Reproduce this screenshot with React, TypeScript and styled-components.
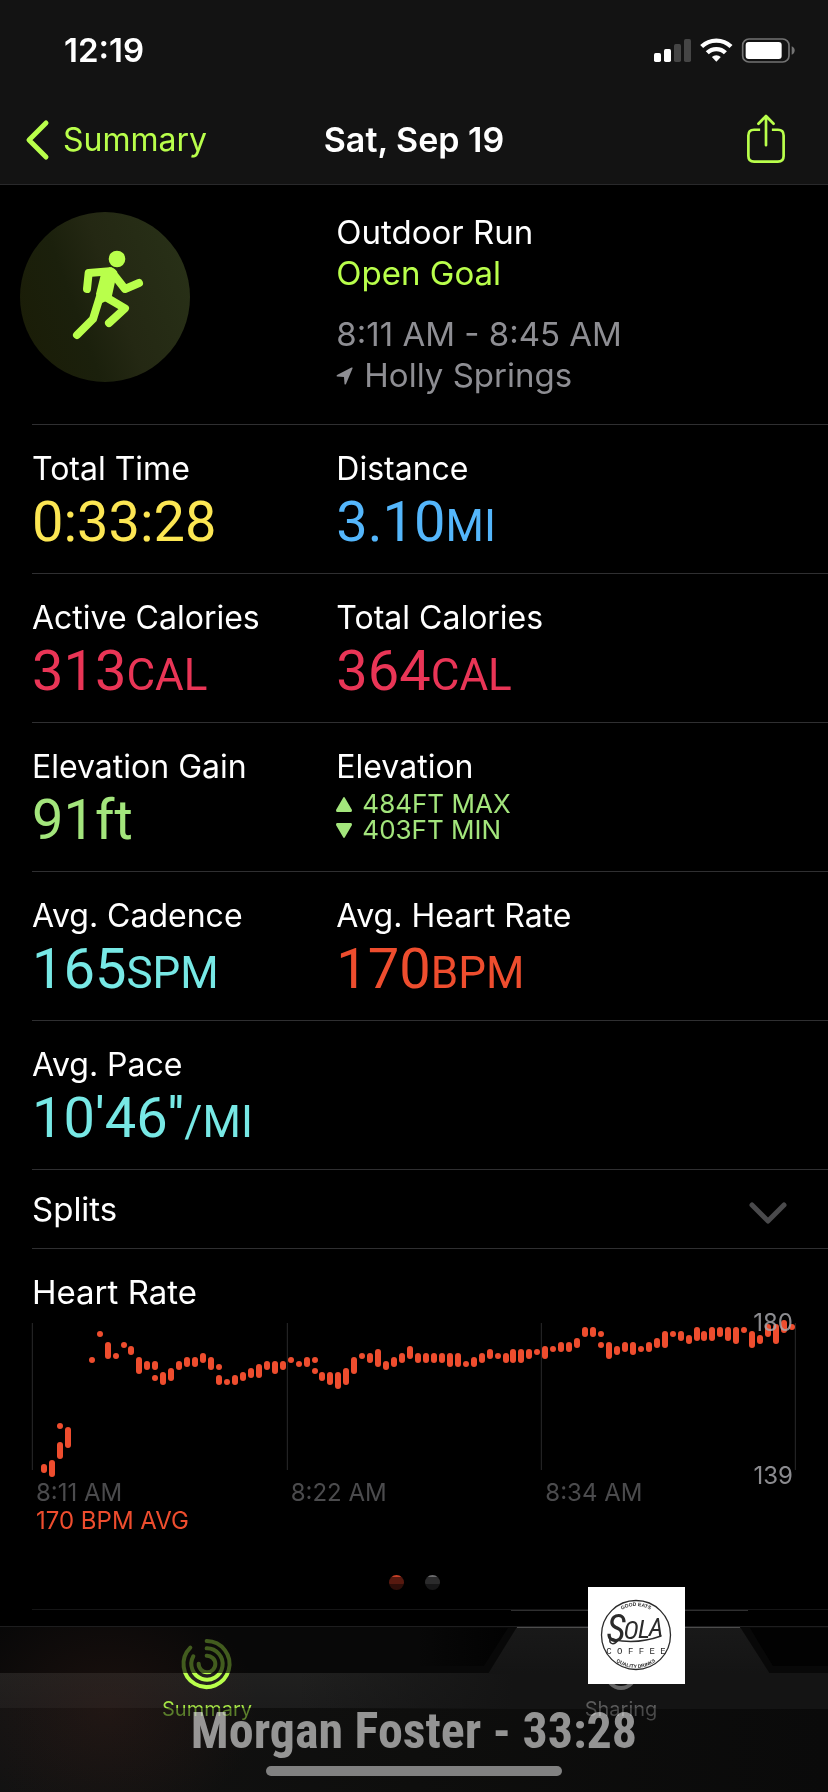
import React from "react";
import styled, { createGlobalStyle } from "styled-components";

const color = {
  lime: "#b9ff4b",
  yellow: "#fce653",
  blue: "#54b6fb",
  pink: "#e93556",
  green: "#a3e57c",
  cyan: "#77e8e5",
  orange: "#ee4d2e",
  gray: "#8e8e93",
  dimGray: "#4b4b4d",
  line: "#2f2f31",
};

const GlobalStyle = createGlobalStyle`
  *, *::before, *::after { box-sizing: border-box; }
  html, body { margin: 0; background: #000; }
  body { font-family: Inter, "Liberation Sans", sans-serif; color: #fff; }
  h1, h2, p, dl, dt, dd { margin: 0; font-weight: 400; }
  button { font: inherit; color: inherit; background: none; border: 0; padding: 0; cursor: pointer; }
  a { color: inherit; text-decoration: none; }
  svg { display: block; overflow: visible; }
`;

const Page = styled.div`
  min-height: 100vh;
  display: flex;
  flex-direction: column;
  overflow-x: hidden;
`;

const Header = styled.header`
  background: #131313;
  border-bottom: 1px solid #29292b;
`;

const StatusBar = styled.div`
  height: 96px;
  padding: 4px 33px 0 64px;
  display: flex;
  align-items: center;
  justify-content: space-between;
`;

const Clock = styled.span`
  font-size: 33px;
  line-height: 40px;
  font-weight: 600;
`;

const StatusIcons = styled.div`
  display: flex;
  align-items: center;
  gap: 10px;
`;

const NavBar = styled.nav`
  height: 88px;
  padding: 0 43px 0 26px;
  display: grid;
  grid-template-columns: 1fr auto 1fr;
  align-items: center;
`;

const BackLink = styled.a`
  display: flex;
  align-items: center;
  gap: 15px;
  color: ${color.lime};
  font-size: 32px;
  line-height: 42px;
`;

const NavTitle = styled.h1`
  font-size: 34px;
  line-height: 42px;
  font-weight: 600;
  margin-left: 17px;
`;

const ShareButton = styled.button`
  justify-self: end;
  color: ${color.lime};
`;

const Main = styled.main`
  padding-left: 32px;
`;

const Columns = styled.div`
  display: grid;
  grid-template-columns: 13fr 21fr;
  border-bottom: 1px solid ${color.line};
`;

const Hero = styled(Columns)`
  min-height: 240px;
  padding: 27px 0;
`;

const Badge = styled.div`
  width: 170px;
  height: 170px;
  margin-left: -12px;
  border-radius: 50%;
  background: linear-gradient(70deg, #1a1c06 0%, #1b200c 35%, #242813 55%, #293218 100%);
`;

const Line = styled.p<{ $tone?: string }>`
  display: flex;
  align-items: center;
  gap: 11px;
  font-size: 33px;
  line-height: 41px;
  color: ${(p) => p.$tone ?? "#fff"};
`;

const When = styled.div`
  margin-top: 20px;
`;

const MetricRow = styled(Columns).attrs({ as: "dl" })`
  min-height: 149px;
  padding-top: 23px;
`;

const MetricLabel = styled.dt`
  font-size: 32px;
  line-height: 42px;
`;

const MetricValue = styled.dd<{ $tone: string }>`
  margin-top: 2px;
  font-family: Roboto, "Liberation Sans", sans-serif;
  font-size: 56px;
  line-height: 60px;
  color: ${(p) => p.$tone};
`;

const Unit = styled.span`
  font-size: 44px;
`;

const Range = styled.dd`
  color: ${color.green};
  font-size: 26px;
  line-height: 26px;
  padding-top: 3px;
`;

const RangeLine = styled.div`
  display: flex;
  align-items: center;
  gap: 10px;
`;

const SplitsRow = styled.button`
  width: 100%;
  min-height: 79px;
  padding-right: 41px;
  display: flex;
  align-items: center;
  justify-content: space-between;
  border-bottom: 1px solid ${color.line};
  font-size: 33px;
  line-height: 41px;
  text-align: left;

  svg { margin-top: 8px; }
`;

const HeartSection = styled.section`
  padding: 23px 0 19px;
  border-bottom: 1px solid #151516;
`;

const SectionTitle = styled.h2`
  font-size: 33px;
  line-height: 41px;
`;

const ChartBox = styled.div`
  position: relative;
  margin: 10px 32px 0 0;
`;

const Bound = styled.span<{ $edge: "top" | "bottom" }>`
  position: absolute;
  right: 3px;
  ${(p) => (p.$edge === "top" ? "top: -14px" : "bottom: -20px")};
  font-size: 24px;
  line-height: 28px;
  color: #aaaaaf;
  opacity: 0.82;
`;

const TimeAxis = styled.div`
  margin: 9px 32px 0 0;
  display: grid;
  grid-template-columns: repeat(3, 1fr);
`;

const Tick = styled.span<{ $tone?: string }>`
  padding-left: 4px;
  font-size: 24px;
  line-height: 28px;
  color: ${(p) => p.$tone ?? color.dimGray};
`;

const Dots = styled.div`
  margin: 40px 32px 0 0;
  display: flex;
  justify-content: center;
  gap: 21px;
`;

const Dot = styled.span<{ $tint: string; $mid: string; $low: string }>`
  width: 15px;
  height: 15px;
  border-radius: 50%;
  background: linear-gradient(
    ${(p) => p.$tint} 2px,
    ${(p) => p.$mid} 2px,
    ${(p) => p.$mid} 9px,
    ${(p) => p.$low} 9px
  );
`;

const Footer = styled.footer`
  position: relative;
  margin-top: auto;
  height: 166px;
  border-top: 1px solid #1d1d1e;
  background:
    radial-gradient(150px 120px at 13% 50%, rgba(70, 36, 28, 0.3), transparent),
    linear-gradient(#080808 46px, transparent 46px),
    linear-gradient(90deg, transparent 36%, #141414 62%) 0 46px / 100% 36px no-repeat,
    linear-gradient(transparent 46px, #20201f 46px, #1c1c1c 81px, transparent 81px),
    linear-gradient(90deg, #121212, #0e0e0d 50%, #0a0a0a);
`;

const Notch = styled.svg`
  position: absolute;
  left: 50%;
  top: -18px;
  width: 414px;
  height: 184px;
`;

const Tabs = styled.nav`
  position: relative;
  display: grid;
  grid-template-columns: 1fr 1fr;
`;

const Tab = styled.a<{ $active?: boolean }>`
  display: flex;
  flex-direction: column;
  align-items: center;
  padding-top: 12px;
  gap: 8px;
  font-size: 20px;
  line-height: 24px;

  span {
    color: transparent;
    background: ${(p) =>
      p.$active
        ? "linear-gradient(#a5e545 11px, #5b7f2b 11px)"
        : "linear-gradient(#5c5c5c 11px, #484848 11px)"};
    background-clip: text;
    -webkit-background-clip: text;
  }
`;

const SponsorCard = styled.div`
  position: absolute;
  left: 71%;
  top: -40px;
  width: 97px;
  height: 97px;
  background: #fff;
`;

const Caption = styled.p`
  position: absolute;
  left: 0;
  right: 0;
  top: 72px;
  text-align: center;
  font-family: "Liberation Sans Narrow", "Roboto Condensed", Roboto, sans-serif;
  font-weight: 700;
  font-size: 50px;
  line-height: 64px;
  color: #8e8e8e;
  mix-blend-mode: screen;
`;

const HomeIndicator = styled.div`
  position: absolute;
  left: 50%;
  bottom: 16px;
  width: 296px;
  height: 10px;
  margin-left: -148px;
  border-radius: 5px;
  background: #818181;
`;

/* Heart-rate samples: centre, top and bottom of each bar in chart units. */
const samples: [number, number, number][] = [
  [132, 882, 909], [156, 870, 921], [180, 759, 777], [180, 816, 867], [204, 771, 834],
  [276, 561, 579], [300, 483, 501], [324, 516, 567], [348, 549, 567], [372, 516, 534],
  [393, 528, 555], [417, 561, 612], [441, 573, 600], [465, 573, 600], [465, 615, 633],
  [489, 606, 645], [513, 594, 633], [537, 573, 600], [561, 561, 591], [585, 561, 591],
  [609, 549, 579], [633, 561, 600], [657, 582, 600], [657, 615, 645], [681, 627, 645],
  [705, 615, 645], [729, 606, 633], [753, 594, 624], [777, 582, 624], [801, 573, 600],
  [825, 573, 612], [849, 573, 600], [873, 561, 579], [897, 573, 591], [921, 561, 591],
  [945, 561, 579], [945, 594, 612], [966, 606, 633], [990, 606, 645], [1014, 606, 657],
  [1038, 594, 645], [1062, 561, 612], [1086, 549, 567], [1110, 549, 579], [1134, 537, 591],
  [1158, 573, 600], [1182, 561, 591], [1206, 549, 579], [1230, 528, 567], [1254, 549, 579],
  [1278, 549, 579], [1302, 549, 579], [1326, 549, 579], [1350, 549, 591], [1374, 549, 591],
  [1398, 573, 591], [1422, 561, 591], [1446, 549, 579], [1470, 537, 567], [1494, 549, 567],
  [1518, 549, 579], [1539, 537, 579], [1563, 537, 579], [1587, 537, 567], [1611, 537, 555],
  [1635, 528, 567], [1659, 528, 546], [1683, 516, 546], [1707, 516, 546], [1731, 504, 534],
  [1755, 471, 501], [1779, 471, 501], [1803, 483, 501], [1803, 516, 534], [1827, 516, 567],
  [1851, 528, 555], [1875, 516, 546], [1899, 516, 555], [1923, 528, 546], [1947, 516, 546],
  [1971, 504, 534], [1995, 483, 534], [2019, 483, 501], [2043, 483, 513], [2067, 495, 522],
  [2091, 471, 513], [2112, 483, 513], [2136, 471, 513], [2160, 471, 501], [2184, 471, 513],
  [2208, 471, 522], [2232, 471, 489], [2256, 483, 534], [2280, 495, 522], [2304, 462, 501],
  [2328, 462, 522], [2352, 450, 489], [2376, 462, 480],
];

function SignalIcon() {
  return (
    <svg width="37" height="23" viewBox="75 54 111 69" aria-label="Signal">
      <rect x="75" y="96" width="21" height="27" rx="5" fill="#fff" />
      <rect x="105" y="84" width="21" height="39" rx="5" fill="#fff" />
      <rect x="135" y="69" width="21" height="54" rx="5" fill="#454545" />
      <rect x="165" y="54" width="21" height="69" rx="5" fill="#454545" />
    </svg>
  );
}

function WifiIcon() {
  return (
    <svg width="31" height="24" viewBox="216 52 94 71" fill="none" stroke="#fff" strokeWidth="13" aria-label="Wi-Fi">
      <path d="M218 77 A64 64 0 0 1 307 77" />
      <path d="M235 96 A39 39 0 0 1 290 96" />
      <path d="M249 109 A20 20 0 0 1 276 109 L262.500 123 Z" fill="#fff" stroke="none" />
    </svg>
  );
}

function BatteryIcon() {
  return (
    <svg width="53" height="25" viewBox="340 51 159 75" aria-label="Battery">
      <rect x="342" y="54" width="139" height="69" rx="19" fill="none" stroke="#737373" strokeWidth="5" />
      <rect x="351" y="63" width="108" height="51" rx="9" fill="#fff" />
      <path d="M489 76 Q498 80 498 88.500 Q498 97 489 101 Z" fill="#737373" />
    </svg>
  );
}

function ShareIcon() {
  return (
    <svg width="38" height="48" viewBox="354 286 113 143" fill="none" stroke="currentColor" strokeWidth="8" strokeLinecap="round" strokeLinejoin="round">
      <path strokeLinecap="butt" d="M393 327 H375 Q358 327 358 344 V405 Q358 422 375 422 H446 Q463 422 463 405 V344 Q463 327 446 327 H428" />
      <path d="M410.500 373 V287 M388 309 L410.500 286 L433 309" />
    </svg>
  );
}

function Runner() {
  return (
    <svg width="170" height="170" viewBox="60 66 510 510" fill="none" stroke={color.lime} strokeWidth="24" strokeLinecap="round" strokeLinejoin="round" aria-label="Running">
      <circle cx="351" cy="207" r="25" fill={color.lime} stroke="none" />
      <path d="M261 297 L266 249 L330 244" />
      <path d="M338 250 L375 297 L417 279" />
      <path d="M231 435 L279 387 L306 300" />
      <path d="M322 324 L375 355 L327 399" />
      <path d="M302 256 L328 232 Q344 232 352 246 L345 276 L334 326 L304 340 L288 312 Z" fill={color.lime} stroke="none" />
    </svg>
  );
}

function Rings() {
  return (
    <svg width="50" height="50" viewBox="546 297 150 150" fill="none" strokeWidth="12" strokeLinecap="round" aria-hidden="true">
      <defs>
        <linearGradient id="ringShade" gradientUnits="userSpaceOnUse" x1="0" x2="0" y1="297" y2="447">
          <stop offset="0.68" stopColor="#425c1e" />
          <stop offset="0.68" stopColor={color.lime} />
        </linearGradient>
      </defs>
      <g stroke="url(#ringShade)">
        <path d="M620 303 A69 69 0 1 1 571 323" />
        <path d="M620 325 A47 47 0 1 1 580 349" />
        <path d="M620 347 A25 25 0 1 1 596 371" />
      </g>
    </svg>
  );
}

function SponsorLogo() {
  return (
    <svg width="97" height="97" viewBox="0 0 97 97" fill="none" stroke="#2b2b2b" aria-label="Sola Coffee">
      <defs>
        <path id="arcTop" d="M19 48 A29 29 0 0 1 77 48" />
        <path id="arcBottom" d="M15 48 A33 33 0 0 0 81 48" />
      </defs>
      <circle cx="48" cy="48" r="34.500" strokeWidth="1.300" />
      <g fill="#2b2b2b" stroke="none" fontFamily="'Liberation Sans', sans-serif" textAnchor="middle">
        <text fontSize="5" fontWeight="700"><textPath href="#arcTop" startOffset="50%">GOOD EATS</textPath></text>
        <text fontSize="5" fontWeight="700"><textPath href="#arcBottom" startOffset="50%">QUALITY DRINKS</textPath></text>
        <text x="48" y="67" fontSize="9" fontFamily="'Liberation Mono', monospace">C O F F E E</text>
        <g fontFamily="'Liberation Sans Narrow', 'Roboto Condensed', Roboto, sans-serif" fontStyle="italic">
          <text x="28" y="55" fontSize="38">S</text>
          <text x="43" y="52" fontSize="26">O</text>
          <text x="56" y="51" fontSize="26">L</text>
          <text x="68" y="49" fontSize="26">A</text>
        </g>
      </g>
      <path d="M30 53 C26 59 21 57 22 52 C24 50 28 54 34 54 Q54 56 73 49" strokeWidth="1.500" strokeLinecap="round" />
    </svg>
  );
}

function HeartChart() {
  return (
    <svg width="100%" viewBox="96 459 2292 441" role="img" aria-label="Heart rate over time">
      {[97, 862, 1624, 2386].map((x) => (
        <line key={x} x1={x} x2={x} y1="459" y2="900" stroke="#29292b" strokeWidth="3" />
      ))}
      {samples.map(([x, top, bottom]) => (
        <rect key={`${x}-${top}`} x={x - 9} y={top} width="18" height={bottom - top} rx="9" fill={color.orange} />
      ))}
    </svg>
  );
}

type MetricProps = { label: string; value: string; unit?: string; tone: string };

function Metric({ label, value, unit, tone }: MetricProps) {
  return (
    <div>
      <MetricLabel>{label}</MetricLabel>
      <MetricValue $tone={tone}>
        {value}
        {unit && <Unit>{unit}</Unit>}
      </MetricValue>
    </div>
  );
}

export default function App() {
  return (
    <Page>
      <GlobalStyle />
      <Header>
        <StatusBar>
          <Clock>12:19</Clock>
          <StatusIcons>
            <SignalIcon />
            <WifiIcon />
            <BatteryIcon />
          </StatusIcons>
        </StatusBar>
        <NavBar>
          <BackLink href="#summary">
            <svg width="22" height="38" viewBox="0 0 22 38" fill="none" stroke="currentColor" strokeWidth="5" strokeLinecap="round" strokeLinejoin="round" aria-hidden="true">
              <path d="M20 2 L3 19 L20 36" />
            </svg>
            Summary
          </BackLink>
          <NavTitle>Sat, Sep 19</NavTitle>
          <ShareButton type="button" aria-label="Share">
            <ShareIcon />
          </ShareButton>
        </NavBar>
      </Header>

      <Main>
        <Hero>
          <Badge>
            <Runner />
          </Badge>
          <div>
            <Line>Outdoor Run</Line>
            <Line $tone={color.lime}>Open Goal</Line>
            <When>
              <Line $tone={color.gray}>8:11 AM - 8:45 AM</Line>
              <Line $tone={color.gray}>
                <svg width="17" height="18" viewBox="0 0 17 18" aria-hidden="true">
                  <path d="M1 8 L15.500 0.500 Q17 0 16.500 1.500 L10 17 Q9 18 8.500 17 L8 10 L1 9.500 Q0 9 1 8 Z" fill="currentColor" />
                </svg>
                Holly Springs
              </Line>
            </When>
          </div>
        </Hero>

        <MetricRow>
          <Metric label="Total Time" value="0:33:28" tone={color.yellow} />
          <Metric label="Distance" value="3.10" unit="MI" tone={color.blue} />
        </MetricRow>
        <MetricRow>
          <Metric label="Active Calories" value="313" unit="CAL" tone={color.pink} />
          <Metric label="Total Calories" value="364" unit="CAL" tone={color.pink} />
        </MetricRow>
        <MetricRow>
          <Metric label="Elevation Gain" value="91ft" tone={color.green} />
          <div>
            <MetricLabel>Elevation</MetricLabel>
            <Range>
              <RangeLine>
                <svg width="16" height="15" viewBox="0 0 16 15" aria-hidden="true">
                  <path d="M7 1 Q8 -1 9 1 L16 13 Q16 15 15 15 H1 Q0 15 0 13 Z" fill="currentColor" />
                </svg>
                484FT MAX
              </RangeLine>
              <RangeLine>
                <svg width="16" height="15" viewBox="0 0 16 15" aria-hidden="true">
                  <path d="M7 14 Q8 16 9 14 L16 2 Q16 0 15 0 H1 Q0 0 0 2 Z" fill="currentColor" />
                </svg>
                403FT MIN
              </RangeLine>
            </Range>
          </div>
        </MetricRow>
        <MetricRow>
          <Metric label="Avg. Cadence" value="165" unit="SPM" tone={color.cyan} />
          <Metric label="Avg. Heart Rate" value="170" unit="BPM" tone={color.orange} />
        </MetricRow>
        <MetricRow>
          <Metric label="Avg. Pace" value={"10'46''"} unit="/MI" tone={color.cyan} />
        </MetricRow>

        <SplitsRow type="button">
          Splits
          <svg width="38" height="22" viewBox="0 0 38 22" fill="none" stroke="#4a4a4c" strokeWidth="5" strokeLinecap="round" strokeLinejoin="round" aria-hidden="true">
            <path d="M3 3 L19 19 L35 3" />
          </svg>
        </SplitsRow>

        <HeartSection>
          <SectionTitle>Heart Rate</SectionTitle>
          <ChartBox>
            <HeartChart />
            <Bound $edge="top">180</Bound>
            <Bound $edge="bottom">139</Bound>
          </ChartBox>
          <TimeAxis>
            <Tick>8:11 AM</Tick>
            <Tick>8:22 AM</Tick>
            <Tick>8:34 AM</Tick>
            <Tick $tone={color.orange}>170 BPM AVG</Tick>
          </TimeAxis>
          <Dots>
            <Dot $tint="#c43f26" $mid="#57190f" $low="#2f0e09" />
            <Dot $tint="#6a6a6c" $mid="#2b2b2c" $low="#171718" />
          </Dots>
        </HeartSection>
      </Main>

      <Footer>
        <Notch viewBox="414 1608 414 184" aria-hidden="true">
          <defs>
            <linearGradient id="notchFill" x1="0" x2="0" y1="0" y2="1">
              <stop offset="0" stopColor="#191919" />
              <stop offset="1" stopColor="#141414" />
            </linearGradient>
            <linearGradient id="fade" x1="0" x2="1" y1="0" y2="0">
              <stop offset="0" stopColor="#020202" stopOpacity="0" />
              <stop offset="1" stopColor="#020202" />
            </linearGradient>
          </defs>
          <path d="M414 1627 H508 L484 1665 H414 Z" fill="url(#fade)" />
          <path d="M750 1627 H828 V1665 H773 Z" fill="#020202" />
          <path d="M517 1626 H740 L770 1673 H488 Z" fill="url(#notchFill)" />
          <path d="M511 1609.500 H748" stroke="#2f2f30" />
          <path d="M517 1626.500 H740" stroke="#4c4c4c" />
        </Notch>
        <Tabs>
          <Tab href="#summary" $active>
            <Rings />
            <span>Summary</span>
          </Tab>
          <Tab href="#sharing">
            <svg width="50" height="50" viewBox="0 0 50 50" fill="none" stroke="#646464" strokeWidth="4" aria-hidden="true">
              <circle cx="25" cy="35" r="14" />
            </svg>
            <span>Sharing</span>
          </Tab>
        </Tabs>
        <SponsorCard>
          <SponsorLogo />
        </SponsorCard>
        <Caption>Morgan Foster - 33:28</Caption>
        <HomeIndicator />
      </Footer>
    </Page>
  );
}
